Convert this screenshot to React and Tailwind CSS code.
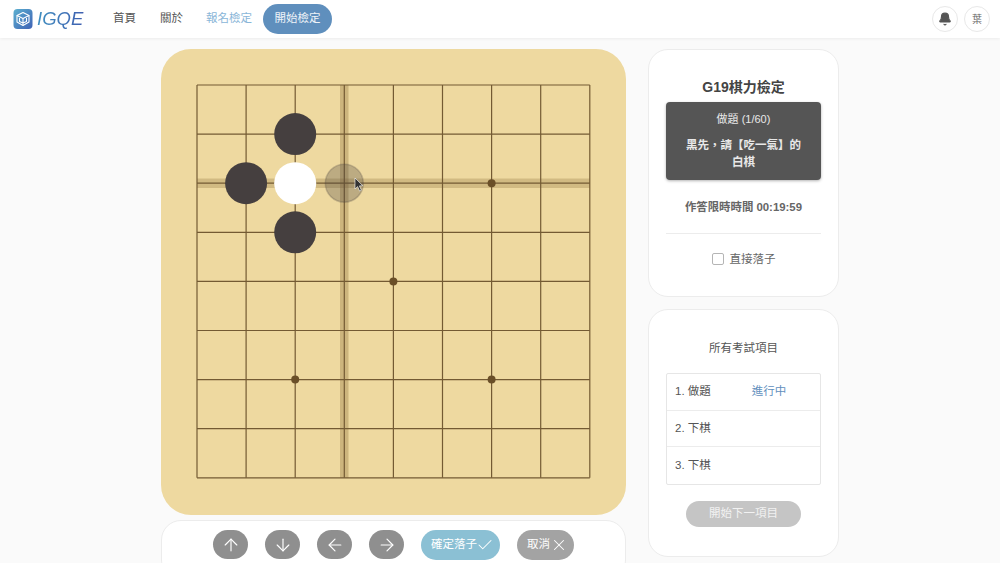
import React from "react";
import { ArrowUp, ArrowDown, ArrowLeft, ArrowRight, Check, X, Bell } from "lucide-react";

const FONT = { fontFamily: '"Liberation Sans", "Noto Sans CJK TC", sans-serif' };

const LINES = [0, 1, 2, 3, 4, 5, 6, 7, 8].map((i) => i * 49.1);
const STARS = [[294.6, 98.2], [196.4, 196.4], [98.2, 294.6], [294.6, 294.6]];
const BLACK = [[98.2, 49.1], [49.1, 98.2], [98.2, 147.3]];

function Logo() {
  return (
    <svg width="20" height="20" viewBox="0 0 20 20">
      <defs>
        <linearGradient id="logo" x1="0" y1="0" x2="1" y2="1">
          <stop offset="0" stopColor="#5cb0d0" />
          <stop offset="1" stopColor="#3f62b5" />
        </linearGradient>
      </defs>
      <rect width="19" height="20" x="0.5" rx="4" fill="url(#logo)" />
      <g fill="none" stroke="#fff" strokeWidth="1.1" strokeLinejoin="round">
        <path d="M10 3.5l6 3-6 3-6-3z" />
        <path d="M4 6.5v6.5l6 3.5 6-3.5V6.5" />
        <path d="M10 9.5v7M6.5 9v3.5l3.5 1.5 3.5-1.5V9" />
      </g>
    </svg>
  );
}

function Header() {
  return (
    <header className="flex h-[38px] items-center bg-white pl-[13px] pr-[10px] shadow-[0_1px_3px_rgba(0,0,0,0.06)]">
      <Logo />
      <span className="ml-[4px] w-[47px] bg-gradient-to-r from-[#3f8fc0] to-[#3f5fb0] bg-clip-text pr-[2px] text-[18.5px] italic text-transparent">
        IGQE
      </span>
      <nav className="ml-[29px] flex items-center text-[11.5px] text-[#555]">
        <span>首頁</span>
        <span className="ml-[24px]">關於</span>
        <span className="ml-[23px] text-[#8ab6d8]">報名檢定</span>
        <span className="ml-[11px] flex h-[30px] w-[69px] items-center justify-center rounded-full bg-[#5f8fbd] text-[#eef3f8]">
          開始檢定
        </span>
      </nav>
      <div className="ml-auto flex items-center gap-[6px]">
        <span className="flex h-[26px] w-[26px] items-center justify-center rounded-full border border-[#e8e8e8]">
          <Bell size={14} fill="#555" stroke="#555" />
        </span>
        <span className="flex h-[26px] w-[26px] items-center justify-center rounded-full border border-[#e8e8e8] text-[10px] text-[#666]">
          葉
        </span>
      </div>
    </header>
  );
}

function Board() {
  return (
    <div className="h-[466px] rounded-[30px] bg-[#eed9a0] p-[36px]">
      <svg width="393" height="394" viewBox="0 0 393 394" className="overflow-visible">
        <rect x="143" y="0" width="8.5" height="393" fill="#8a6a35" opacity="0.32" />
        <rect x="0" y="93.5" width="393" height="9.5" fill="#8a6a35" opacity="0.28" />
        {LINES.map((p) => (
          <g key={p} stroke="#735a33" strokeWidth="1.2">
            <line x1={p} y1="0" x2={p} y2="392.8" />
            <line x1="0" y1={p} x2="392.8" y2={p} />
          </g>
        ))}
        {STARS.map(([x, y]) => (
          <circle key={x + "-" + y} cx={x} cy={y} r="4" fill="#6a4f28" />
        ))}
        {BLACK.map(([x, y]) => (
          <circle key={x + "-" + y} cx={x} cy={y} r="21" fill="#453f3f" />
        ))}
        <circle cx="98.2" cy="98.2" r="21" fill="#fff" />
        <circle cx="147.3" cy="98.2" r="19" fill="#4a4340" fillOpacity="0.3" stroke="#4a4340" strokeOpacity="0.25" strokeWidth="1.5" />
        <path
          d="M158 93l0 11 2.6-2.4 2 4.4 1.8-.8-2-4.3 3.4-.2z"
          fill="#333"
          stroke="#fff"
          strokeWidth="0.6"
        />
      </svg>
    </div>
  );
}

function Controls() {
  const arrow = "flex h-[29px] w-[35px] items-center justify-center rounded-full bg-[#8f8f8f] text-white";
  return (
    <div className="mt-[5px] flex h-[60px] items-start gap-[17px] rounded-[20px] border border-[#ececec] bg-white pl-[51px] pt-[9px]">
      <span className={arrow}><ArrowUp size={20} strokeWidth={1.4} /></span>
      <span className={arrow}><ArrowDown size={20} strokeWidth={1.4} /></span>
      <span className={arrow}><ArrowLeft size={20} strokeWidth={1.4} /></span>
      <span className={arrow}><ArrowRight size={20} strokeWidth={1.4} /></span>
      <span className="flex h-[30px] w-[79px] items-center rounded-full bg-[#8bc0d4] pl-[10px] text-[11.5px] text-white">
        確定落子<Check size={18} strokeWidth={1.4} className="-ml-[1px]" />
      </span>
      <span className="flex h-[30px] w-[57px] items-center rounded-full bg-[#a3a3a3] pl-[10px] text-[11.5px] text-white">
        取消<X size={18} strokeWidth={1.4} />
      </span>
    </div>
  );
}

function ExamCard() {
  return (
    <section className="flex h-[248px] flex-col items-center rounded-[20px] border border-[#ececec] bg-white px-[17px] pt-[27px]">
      <h2 className="text-[14px] font-bold leading-[20px] text-[#444]">G19棋力檢定</h2>
      <div className="mt-[5px] h-[78px] w-[155px] rounded-[4px] bg-[#555] pt-[9px] text-center text-[11.5px] font-bold leading-[17px] text-[#e8e8e8] shadow-[0_1px_3px_rgba(0,0,0,0.3)]">
        <p className="text-[11px] font-normal">做題 (1/60)</p>
        <p className="mt-[9px]">
          黑先，請【吃一氣】的
          <br />
          白棋
        </p>
      </div>
      <p className="mt-[19px] text-[11.4px] font-bold leading-[16px] text-[#666]">作答限時時間 00:19:59</p>
      <div className="mt-[18px] h-px w-[155px] bg-[#ececec]" />
      <label className="mt-[17px] flex items-center gap-[6px] text-[11.5px] leading-[16px] text-[#666]">
        <span className="h-[12px] w-[12px] rounded-[2px] border border-[#b5b5b5] bg-white" />
        直接落子
      </label>
    </section>
  );
}

function ProgressCard() {
  const rowBase = "flex h-[36.7px] items-center px-[8px] text-[11.5px] text-[#555]";
  return (
    <section className="mt-[12px] flex h-[248px] flex-col items-center rounded-[20px] border border-[#ececec] bg-white px-[17px] pt-[30px]">
      <h3 className="text-[11.5px] leading-[16px] text-[#555]">所有考試項目</h3>
      <div className="mt-[17px] w-[155px] divide-y divide-[#ececec] rounded-[2px] border border-[#e6e6e6]">
        <div className={rowBase}>
          <span>1. 做題</span>
          <span className="ml-[41px] text-[#5f8fbd]">進行中</span>
        </div>
        <div className={rowBase}>2. 下棋</div>
        <div className={rowBase}>3. 下棋</div>
      </div>
      <button className="mt-[16px] h-[26px] w-[115px] rounded-full bg-[#c5c5c5] text-[11.5px] text-[#f2f2f2]">
        開始下一項目
      </button>
    </section>
  );
}

export default function App() {
  return (
    <div className="h-[563px] overflow-hidden bg-[#fafafa]" style={FONT}>
      <Header />
      <main className="flex justify-center gap-[22px] pt-[11px]">
        <div className="w-[465px]">
          <Board />
          <Controls />
        </div>
        <aside className="w-[191px]">
          <ExamCard />
          <ProgressCard />
        </aside>
      </main>
    </div>
  );
}
